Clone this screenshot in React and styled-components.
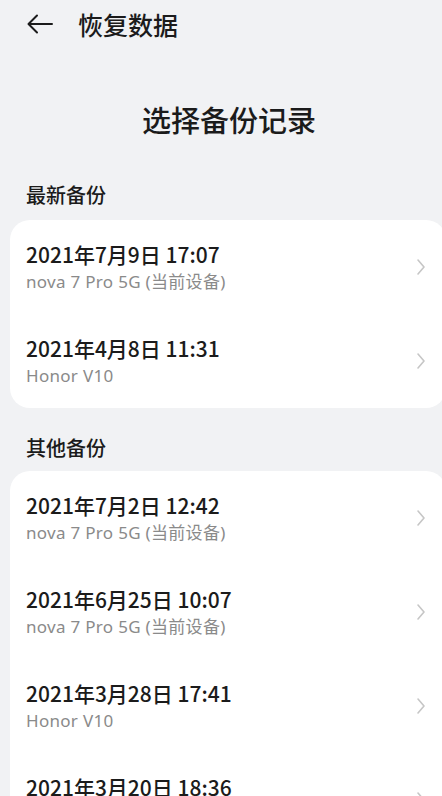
import React from "react";
import styled, { createGlobalStyle } from "styled-components";

const GlobalStyle = createGlobalStyle`
  html, body {
    margin: 0;
    padding: 0;
    background: #f1f2f4;
    overflow: hidden;
  }
  body {
    font-family: "Noto Sans CJK SC", "Noto Sans", sans-serif;
    color: #1b1b1b;
  }
`;

const Page = styled.div`
  width: 442px;
  height: 796px;
  overflow: hidden;
  background: #f1f2f4;
`;

const TopBar = styled.div`
  height: 48px;
  display: flex;
  align-items: center;
  padding-left: 26px;
  gap: 24px;
`;

const BackButton = styled.button`
  border: none;
  background: none;
  padding: 0;
  display: flex;
  align-items: center;
  color: #1b1b1b;
`;

const TopTitle = styled.h1`
  margin: 0;
  font-size: 25px;
  font-weight: 500;
  line-height: 32px;
`;

const PageTitle = styled.h2`
  margin: 51px 0 0;
  padding-left: 16px;
  text-align: center;
  font-size: 29px;
  font-weight: 500;
  line-height: 40px;
`;

const SectionLabel = styled.div`
  margin: ${(p) => p.$top}px 0 0 26px;
  font-size: 20px;
  font-weight: 500;
  line-height: 28px;
`;

const Card = styled.div`
  margin: ${(p) => p.$top}px -4px 0 10px;
  background: #ffffff;
  border-radius: 20px;
`;

const Row = styled.div`
  display: flex;
  align-items: center;
  padding: 20px 14px 20px 16px;
`;

const RowText = styled.div`
  flex: 1;
`;

const RowTitle = styled.div`
  font-size: 21px;
  font-weight: 500;
  line-height: 28px;
  color: #1b1b1b;
`;

const RowSub = styled.div`
  margin-top: 2px;
  font-family: "Noto Sans", "Noto Sans CJK SC", sans-serif;
  font-size: 17px;
  letter-spacing: 0.3px;
  line-height: 24px;
  color: #8a8a8a;
`;

const Chevron = styled.svg`
  flex-shrink: 0;
  margin-right: 6px;
`;

const latest = [
  { time: "2021年7月9日 17:07", device: "nova 7 Pro 5G (当前设备)" },
  { time: "2021年4月8日 11:31", device: "Honor V10" },
];

const others = [
  { time: "2021年7月2日 12:42", device: "nova 7 Pro 5G (当前设备)" },
  { time: "2021年6月25日 10:07", device: "nova 7 Pro 5G (当前设备)" },
  { time: "2021年3月28日 17:41", device: "Honor V10" },
  { time: "2021年3月20日 18:36", device: "Honor V10" },
];

function BackupRow({ item }) {
  return (
    <Row>
      <RowText>
        <RowTitle>{item.time}</RowTitle>
        <RowSub>{item.device}</RowSub>
      </RowText>
      <Chevron width="10" height="18" viewBox="0 0 10 18" fill="none">
        <path d="M2 2l6 7-6 7" stroke="#c6c6c6" strokeWidth="1.6" strokeLinecap="round" strokeLinejoin="round" />
      </Chevron>
    </Row>
  );
}

export default function App() {
  return (
    <Page>
      <GlobalStyle />
      <TopBar>
        <BackButton aria-label="返回">
          <svg width="28" height="22" viewBox="0 0 28 22" fill="none">
            <path d="M26 11H3M11 2.5L2.5 11 11 19.5" stroke="#1b1b1b" strokeWidth="2" strokeLinecap="round" strokeLinejoin="round" />
          </svg>
        </BackButton>
        <TopTitle>恢复数据</TopTitle>
      </TopBar>
      <PageTitle>选择备份记录</PageTitle>
      <SectionLabel $top={42}>最新备份</SectionLabel>
      <Card $top={11}>
        {latest.map((item) => (
          <BackupRow key={item.time} item={item} />
        ))}
      </Card>
      <SectionLabel $top={26}>其他备份</SectionLabel>
      <Card $top={9}>
        {others.map((item) => (
          <BackupRow key={item.time} item={item} />
        ))}
      </Card>
    </Page>
  );
}
